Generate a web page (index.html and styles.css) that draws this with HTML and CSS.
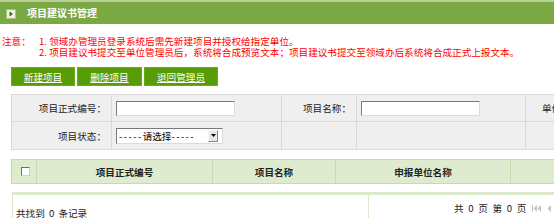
FILE: index.html
```html
<!DOCTYPE html>
<html lang="zh-CN">
<head>
<meta charset="utf-8">
<title>项目建议书管理</title>
<link rel="stylesheet" href="styles.css">
</head>
<body>
<div class="page">
  <div class="titlebar">
    <span class="ticon"><svg width="10" height="10" viewBox="0 0 10 10"><rect x="0.5" y="0.5" width="9" height="9" fill="#eef2e2" stroke="#a9c08a"/><polygon points="3.5,2.5 7,5 3.5,7.5" fill="#2f6a10"/></svg></span>
    <span class="ttext">项目建议书管理</span>
  </div>

  <div class="notice">
    <span class="nlabel">注意：</span>
    <div class="nlines">
      <div>1. 领域办管理员登录系统后需先新建项目并授权给指定单位。</div>
      <div>2. 项目建议书提交至单位管理员后，系统将合成预览文本；项目建议书提交至领域办后系统将合成正式上报文本。</div>
    </div>
  </div>

  <div class="toolbar">
    <a class="btn b1" href="#">新建项目</a>
    <a class="btn b2" href="#">删除项目</a>
    <a class="btn b3" href="#">退回管理员</a>
  </div>

  <table class="search">
    <colgroup><col class="c1"><col class="c2"><col class="c3"><col class="c4"><col class="c5"></colgroup>
    <tr>
      <td class="lbl">项目正式编号：</td>
      <td><input class="txt" type="text"></td>
      <td class="lbl">项目名称：</td>
      <td><input class="txt" type="text"></td>
      <td class="lbl lft">单位名称：</td>
    </tr>
    <tr class="r2">
      <td class="lbl">项目状态：</td>
      <td><span class="selbox"><span class="seltext"><span class="dash">-----</span>请选择<span class="dash">-----</span></span><span class="selarrow"><svg width="5" height="3" viewBox="0 0 5 3"><polygon points="0,0 5,0 2.5,3" fill="#000"/></svg></span></span></td>
      <td></td>
      <td></td>
      <td></td>
    </tr>
  </table>

  <table class="grid">
    <colgroup><col class="g1"><col class="g2"><col class="g3"><col class="g4"><col class="g5"></colgroup>
    <tr>
      <th><input class="chk" type="checkbox"></th>
      <th>项目正式编号</th>
      <th>项目名称</th>
      <th>申报单位名称</th>
      <th>项目状态</th>
    </tr>
  </table>

  <div class="footer">
    <div class="fleft">共找到 0 条记录</div>
    <div class="fright">
      <span class="ptext">共 0 页 第 0 页</span>
      <span class="picon"><svg width="9" height="7" viewBox="0 0 9 7"><rect x="0" y="0" width="1" height="7" fill="#c4c4c4"/><polygon points="5,0 5,7 1.5,3.5" fill="#c4c4c4"/><polygon points="9,0 9,7 5.5,3.5" fill="#c4c4c4"/></svg></span>
      <span class="picon"><svg width="5" height="7" viewBox="0 0 5 7"><polygon points="4,0 4,7 0.5,3.5" fill="#c4c4c4"/></svg></span>
      <span class="picon"><svg width="5" height="7" viewBox="0 0 5 7"><polygon points="1,0 1,7 4.5,3.5" fill="#c4c4c4"/></svg></span>
    </div>
  </div>
</div>
</body>
</html>
```

FILE: styles.css
```css
html, body {
  margin: 0;
  padding: 0;
  background: #fff;
  overflow: hidden;
}
body {
  font-family: "Noto Sans CJK SC", "Liberation Sans", sans-serif;
  font-size: 9.6px;
  color: #222;
}
.page {
  width: 760px;
}
.titlebar {
  height: 22px;
  border-top: 2px solid #b9d097;
  background: #7ba843;
  display: flex;
  align-items: center;
  padding-left: 6px;
}
.ticon {
  display: flex;
  width: 10px;
  height: 10px;
  margin-top: 1px;
}
.ttext {
  margin-left: 11px;
  color: #fff;
  font-weight: bold;
  font-size: 10px;
  line-height: 12px;
}
.notice {
  margin-top: 12px;
  display: flex;
  color: #ff0000;
  line-height: 11px;
  padding-left: 2px;
}
.nlabel {
  width: 37px;
  flex: none;
}
.toolbar {
  margin-top: 9px;
  margin-left: 11px;
  display: flex;
  gap: 2px;
  height: 19px;
}
.btn {
  display: flex;
  align-items: center;
  justify-content: center;
  background: #589c06;
  color: #fff;
  text-decoration: underline;
  height: 19px;
  box-sizing: border-box;
  border: 1px solid #6aab1c;
}
.b1 { width: 64px; }
.b2 { width: 65px; }
.b3 { width: 74px; }

.search {
  margin-top: 8px;
  margin-left: 11px;
  border-collapse: collapse;
  table-layout: fixed;
  width: 700px;
  background: #efefef;
}
.search td {
  border: 1px solid #d9d9d9;
  height: 26px;
  padding: 0;
  vertical-align: middle;
}
.search .r2 td { height: 27px; }
.c1 { width: 100px; }
.c2 { width: 170px; }
.c3 { width: 75px; }
.c4 { width: 169px; }
.c5 { width: 186px; }
.search .lbl {
  text-align: right;
  padding-right: 5px;
}
.search .lbl.lft {
  text-align: left;
  padding-left: 16px;
}
.txt {
  display: block;
  margin-left: 4px;
  width: 119px;
  height: 15px;
  box-sizing: border-box;
  border: 1px solid;
  border-color: #7a7a7a #dcdcdc #dcdcdc #7a7a7a;
  background: #fff;
  padding: 0;
  font: inherit;
}
.selbox {
  display: flex;
  align-items: center;
  margin-left: 4px;
  width: 107px;
  height: 16px;
  box-sizing: border-box;
  border: 1px solid;
  border-color: #7a7a7a #dcdcdc #dcdcdc #7a7a7a;
  background: #fff;
}
.seltext {
  flex: 1;
  padding-left: 2px;
  color: #000;
  white-space: nowrap;
  line-height: 12px;
}
.dash {
  letter-spacing: 1.4px;
}
.selarrow {
  display: flex;
  align-items: center;
  justify-content: center;
  width: 10px;
  height: 12px;
  margin-right: 4px;
  background: #e6e6e6;
  box-sizing: border-box;
  border: 1px solid;
  border-color: #f8f8f8 #8a8a8a #8a8a8a #f8f8f8;
}

.grid {
  margin-top: 9px;
  margin-left: 11px;
  border-collapse: collapse;
  table-layout: fixed;
  width: 640px;
  background: #dfebcf;
}
.grid th {
  border: 1px solid #c6dcae;
  height: 23px;
  padding: 0;
  font-weight: bold;
  text-align: center;
  vertical-align: middle;
}
.g1 { width: 25px; }
.g2 { width: 176px; }
.g3 { width: 123px; }
.g4 { width: 175px; }
.g5 { width: 141px; }
.chk {
  appearance: none;
  -webkit-appearance: none;
  display: block;
  margin: 0 auto 0 9px;
  width: 9px;
  height: 9px;
  box-sizing: border-box;
  border: 1px solid;
  border-color: #6d6d6d #d0d0d0 #d0d0d0 #6d6d6d;
  background: #fff;
}

.footer {
  margin-top: 8px;
  margin-left: 12px;
  border-top: 3px solid #dce9cd;
  border-left: 1px solid #dce9cd;
  display: flex;
  height: 40px;
}
.fleft {
  width: 356px;
  border-right: 1px solid #dce9cd;
  padding-left: 3px;
  padding-top: 13px;
  box-sizing: border-box;
  line-height: 11px;
  word-spacing: 2px;
}
.fright {
  display: flex;
  align-items: flex-start;
  padding-left: 85px;
  padding-top: 8px;
  line-height: 11px;
}
.ptext {
  white-space: nowrap;
  word-spacing: 2.5px;
}
.picon {
  display: flex;
  margin-left: 6px;
  margin-top: 2px;
}
.picon + .picon {
  margin-left: 6px;
}
```
